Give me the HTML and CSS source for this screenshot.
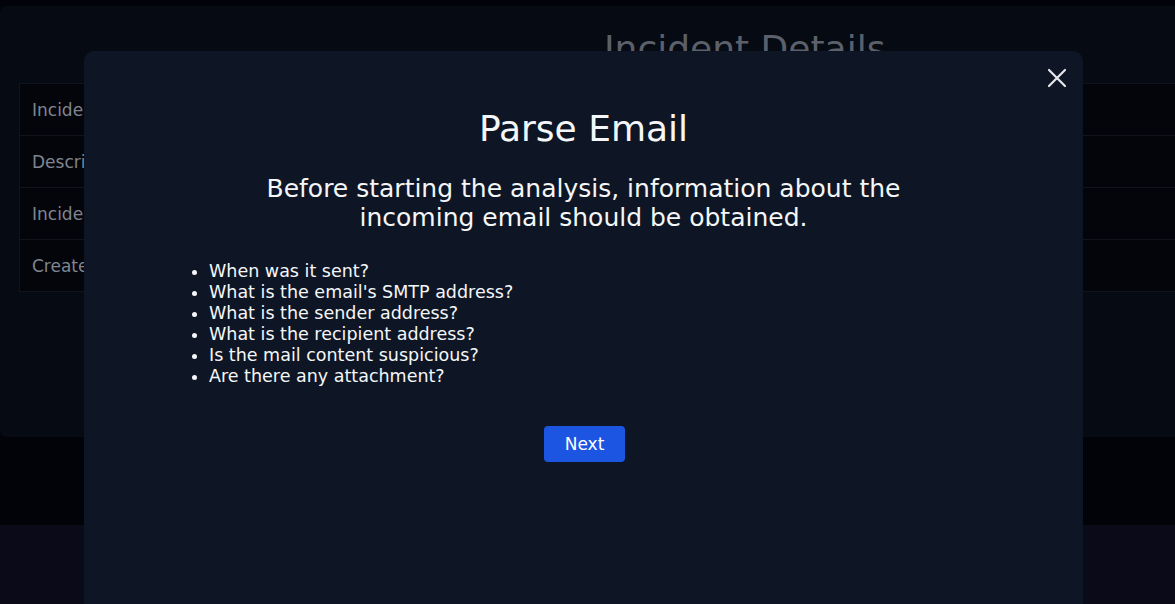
FILE: index.html
```html
<!DOCTYPE html>
<html lang="en">

<head>
    <meta charset="utf-8">
    <meta name="viewport" content="width=device-width, initial-scale=1.0">
    <title>Incident Details</title>
    <link rel="stylesheet" href="styles.css">
</head>

<body>

    <div class="side">
        <div class="kort">
            <h1 class="kort-titel">Incident Details</h1>
            <table class="detaljer">
                <tr><td>Incident ID</td><td></td></tr>
                <tr><td>Description</td><td></td></tr>
                <tr><td>Incident Type</td><td></td></tr>
                <tr><td>Created At</td><td></td></tr>
            </table>
        </div>
        <div class="mellemrum"></div>
        <div class="bund"></div>
    </div>

    <div class="modal">
        <button class="luk" aria-label="Close">
            <svg width="20" height="20" viewBox="0 0 20 20">
                <path d="M2 2 L18 18 M18 2 L2 18" stroke="#e5e7eb" stroke-width="2.2" stroke-linecap="round" fill="none"/>
            </svg>
        </button>
        <h2 class="modal-titel">Parse Email</h2>
        <p class="modal-tekst">Before starting the analysis, information about the incoming email should be obtained.</p>
        <ul class="spoergsmaal">
            <li>When was it sent?</li>
            <li>What is the email's SMTP address?</li>
            <li>What is the sender address?</li>
            <li>What is the recipient address?</li>
            <li>Is the mail content suspicious?</li>
            <li>Are there any attachment?</li>
        </ul>
        <div class="knapper">
            <button class="naeste">Next</button>
        </div>
    </div>

</body>

</html>
```

FILE: styles.css
```css
html, body {
    margin: 0;
    height: 100%;
    overflow: hidden;
}

body {
    background-color: #02030a;
    font-family: "DejaVu Sans", sans-serif;
}

.side {
    padding-top: 6px;
}

.kort {
    background-color: #060a12;
    height: 431px;
    margin-right: -20px;
    border-radius: 6px;
    padding: 0 0 0 19px;
    box-sizing: border-box;
    overflow: hidden;
}

.kort-titel {
    margin: 0;
    padding: 22px 0 0 585px;
    height: 77px;
    box-sizing: border-box;
    font-weight: 400;
    font-size: 36px;
    color: #5b606b;
}

.detaljer {
    width: 100%;
    border-collapse: collapse;
    background-color: #03050b;
}

.detaljer td {
    height: 51px;
    border: 1px solid #10141d;
    padding: 0 12px;
    font-size: 17px;
    color: #80858f;
}

.mellemrum {
    height: 88px;
    background-color: #020209;
}

.bund {
    height: 79px;
    background-color: #0b0a18;
}

.modal {
    position: fixed;
    top: 51px;
    left: 84px;
    width: 999px;
    bottom: 0;
    background-color: #0e1626;
    border-radius: 10px 10px 0 0;
    color: #f5f6f8;
    padding-top: 57px;
    box-sizing: border-box;
}

.luk {
    position: absolute;
    top: 17px;
    right: 16px;
    background: none;
    border: 0;
    padding: 0;
    cursor: pointer;
}

.modal-titel {
    margin: 0;
    text-align: center;
    font-weight: 400;
    font-size: 36px;
    line-height: 42px;
}

.modal-tekst {
    margin: 24px auto 0;
    max-width: 660px;
    text-align: center;
    font-size: 25px;
    line-height: 29px;
}

.spoergsmaal {
    margin: 29px 0 0;
    padding-left: 125px;
    font-size: 17.5px;
    line-height: 21px;
}

.knapper {
    text-align: center;
    margin-top: 39px;
}

.naeste {
    background-color: #1c55e2;
    color: #fff;
    border: 0;
    border-radius: 4px;
    width: 81px;
    height: 36px;
    margin-left: 2px;
    font-family: inherit;
    font-size: 17px;
    cursor: pointer;
}
```
